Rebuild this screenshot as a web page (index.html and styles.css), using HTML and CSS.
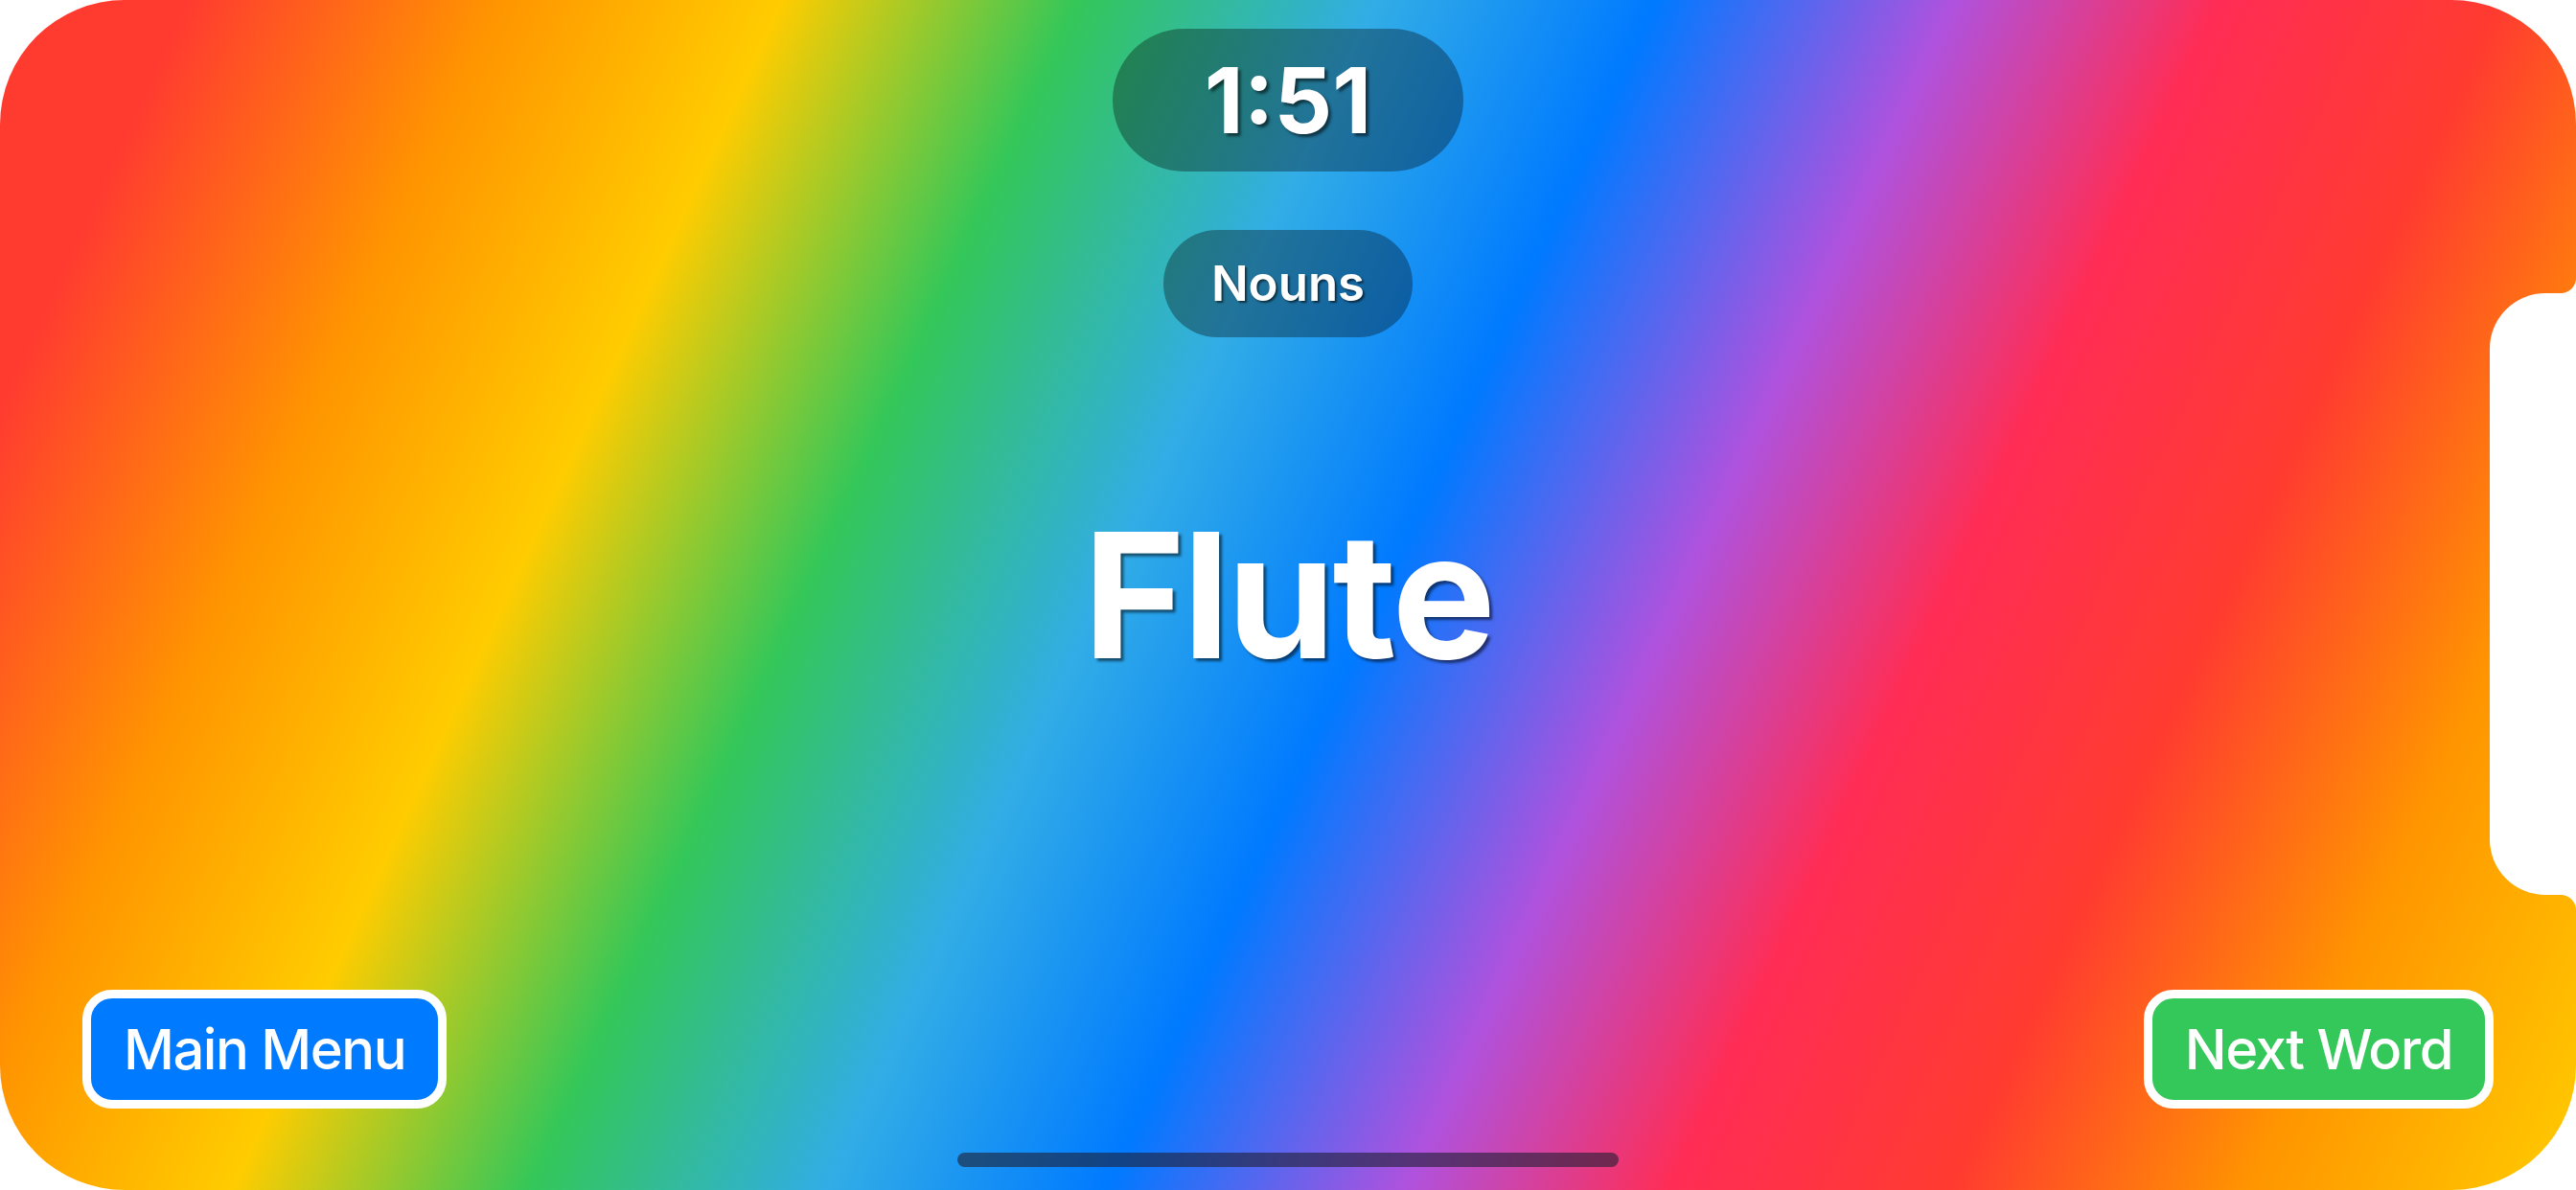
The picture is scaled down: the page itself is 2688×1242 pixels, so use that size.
FILE: index.html
```html
<!DOCTYPE html>
<html lang="en">
<head>
  <meta charset="UTF-8" />
  <title>Charades - Game</title>
  <link rel="stylesheet" href="styles.css">
</head>
<body>

<div class="screen">
  <section class="top">
    <div class="pill timer">1:51</div>
    <div class="pill category">Nouns</div>
  </section>

  <main class="word">Flute</main>

  <section class="bottom">
    <div class="actions">
      <button class="action-btn menu-btn">Main Menu</button>
      <button class="action-btn next-btn">Next Word</button>
    </div>
    <div class="home-bar"></div>
  </section>

  <!-- device cutout -->
  <div class="notch"></div>
</div>

</body>
</html>
```

FILE: styles.css
```css
body {
  margin: 0;
  padding: 0;
  background: #fff;
  font-family: 'Inter', 'Noto Sans', sans-serif;
  overflow: hidden;
}

.screen {
  position: relative;
  width: 2688px;
  height: 1242px;
  border-radius: 130px;
  overflow: hidden;
  display: grid;
  background: linear-gradient(114.8deg,
    #ff3b30 0%,
    #ff3b30 6%,
    #ff9500 16%,
    #ffcc00 25%,
    #34c759 34.5%,
    #32ade6 44%,
    #007aff 53%,
    #af52de 62.5%,
    #ff2d55 71%,
    #ff3b30 80%,
    #ff9500 89.5%,
    #ffcc00 100%);
}

.screen > .top,
.screen > .word,
.screen > .bottom {
  grid-area: 1 / 1;
}

/* TOP: timer + category */
.top {
  align-self: start;
  display: flex;
  flex-direction: column;
  align-items: center;
  gap: 61px;
  padding-top: 30px;
}

.pill {
  background: rgba(0, 0, 0, 0.33);
  color: white;
  border-radius: 80px;
}

.timer {
  font-size: 95px;
  font-weight: 700;
  line-height: 149px;
  padding: 0 96px;
  text-shadow: 3px 3px 3px rgba(0, 0, 0, 0.55);
}

.category {
  font-size: 51px;
  font-weight: 600;
  line-height: 112px;
  padding: 0 50px;
  text-shadow: 2px 2px 2px rgba(0, 0, 0, 0.55);
}

/* WORD */
.word {
  align-self: center;
  justify-self: center;
  color: white;
  font-size: 182px;
  font-weight: 700;
  line-height: 1;
  letter-spacing: -3px;
  text-shadow: 3px 3px 3px rgba(0, 0, 0, 0.55);
}

/* BOTTOM: buttons + home indicator */
.bottom {
  align-self: end;
  display: flex;
  flex-direction: column;
  align-items: center;
  padding: 0 86px 24px;
}

.actions {
  align-self: stretch;
  display: flex;
  justify-content: space-between;
}

.action-btn {
  font-family: inherit;
  font-size: 58px;
  font-weight: 500;
  letter-spacing: -1.5px;
  color: white;
  line-height: 106px;
  padding: 0 34px;
  border: 9px solid white;
  border-radius: 31px;
  cursor: pointer;
}

.menu-btn {
  background: #007aff;
}

.next-btn {
  background: #34c759;
}

.home-bar {
  margin-top: 46px;
  width: 690px;
  height: 15px;
  border-radius: 8px;
  background: rgba(30, 30, 50, 0.6);
}

/* notch cutout on the right edge */
.notch {
  position: absolute;
  top: 306px;
  right: 0;
  width: 90px;
  height: 628px;
  background: #fff;
  border-radius: 58px 0 0 58px;
}

.notch::before,
.notch::after {
  content: '';
  position: absolute;
  right: 0;
  width: 16px;
  height: 16px;
}

.notch::before {
  top: -16px;
  background: radial-gradient(circle at 0 0, transparent 15.5px, #fff 16.5px);
}

.notch::after {
  bottom: -16px;
  background: radial-gradient(circle at 0 100%, transparent 15.5px, #fff 16.5px);
}
```
